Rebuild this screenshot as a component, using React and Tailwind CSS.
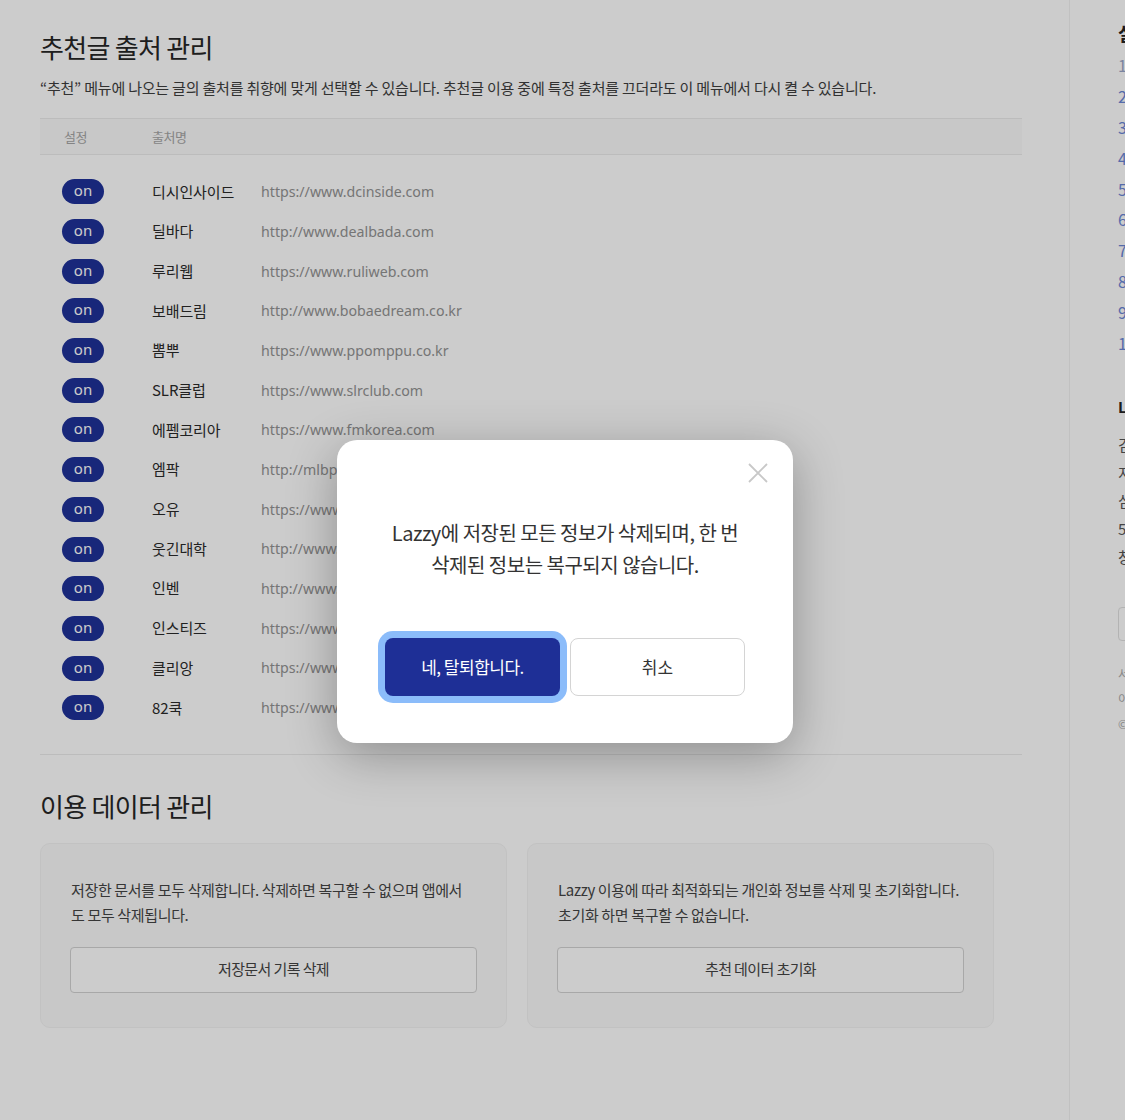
import React from 'react';

const KR = "font-['Noto_Sans_CJK_KR',sans-serif]";
const LATIN = "font-['Noto_Sans','Noto_Sans_CJK_KR',sans-serif]";

const sources = [
  { name: '디시인사이드', url: 'https://www.dcinside.com' },
  { name: '딜바다', url: 'http://www.dealbada.com' },
  { name: '루리웹', url: 'https://www.ruliweb.com' },
  { name: '보배드림', url: 'http://www.bobaedream.co.kr' },
  { name: '뽐뿌', url: 'https://www.ppomppu.co.kr' },
  { name: 'SLR클럽', url: 'https://www.slrclub.com' },
  { name: '에펨코리아', url: 'https://www.fmkorea.com' },
  { name: '엠팍', url: 'http://mlbpark.donga.com' },
  { name: '오유', url: 'https://www.todayhumor.co.kr' },
  { name: '웃긴대학', url: 'http://www.humoruniv.com' },
  { name: '인벤', url: 'http://www.inven.co.kr' },
  { name: '인스티즈', url: 'https://www.instiz.net' },
  { name: '클리앙', url: 'https://www.clien.net' },
  { name: '82쿡', url: 'https://www.82cook.com' },
];

const keywords = ['1 라지 추천글', '2 커뮤니티 인기글', '3 오늘의 유머', '4 IT 뉴스', '5 자동차 리뷰', '6 게임 소식', '7 스포츠 하이라이트', '8 요리 레시피', '9 여행 후기', '10 생활 꿀팁'];

const SourceRow = ({ name, url }) => (
  <div className="flex items-center h-[39.7px]">
    <div className="w-[112px] pl-[22px]">
      <span className={`flex items-center justify-center w-[42px] h-[25px] rounded-full bg-[#1f3199] text-white text-[15px] leading-none pb-[2px] ${LATIN}`}>
        on
      </span>
    </div>
    <span className={`w-[109px] text-[15px] text-[#2a2a2a] tracking-[-0.1px] ${KR}`}>{name}</span>
    <span className={`text-[14.2px] text-[#939393] ${LATIN}`}>{url}</span>
  </div>
);

const DataCard = ({ text, button }) => (
  <div className="w-[467px] h-[185px] rounded-[10px] border border-[#f3f3f3] bg-[#fbfbfb] px-[29px] pt-[33px]">
    <p className={`pl-[1px] text-[15px] leading-[25px] text-[#444] tracking-[-0.35px] ${KR}`}>{text}</p>
    <button className={`mt-[20px] w-full h-[46px] rounded-[4px] border border-[#d2d2d2] bg-white text-[15px] text-[#444] tracking-[-0.6px] ${KR}`}>
      {button}
    </button>
  </div>
);

export default function App() {
  return (
    <div className={`relative w-[1125px] h-[1120px] overflow-hidden bg-white flex ${KR}`}>
      <main className="w-[1069px] shrink-0 pl-10 pt-[28px]">
        <h2 className="text-[26px] leading-[38px] text-[#262626] tracking-[-0.7px]">추천글 출처 관리</h2>
        <p className="mt-[11px] text-[15px] leading-[22px] text-[#3e3e3e] tracking-[-0.2px]">
          “추천” 메뉴에 나오는 글의 출처를 취향에 맞게 선택할 수 있습니다. 추천글 이용 중에 특정 출처를 끄더라도 이 메뉴에서 다시 켤 수 있습니다.
        </p>

        <div className="w-[982px] mt-[19px]">
          <div className="flex items-center h-[37px] border-y border-[#ececec] bg-[#fafafa] text-[13px] text-[#a6a6a6] tracking-[-0.5px]">
            <span className="w-[112px] pl-[24px]">설정</span>
            <span>출처명</span>
          </div>
          <div className="pt-[17px]">
            {sources.map((s) => (
              <SourceRow key={s.name} {...s} />
            ))}
          </div>
          <div className="mt-[26px] border-t border-[#ececec]" />
        </div>

        <h2 className="mt-[32px] text-[26px] leading-[38px] text-[#262626] tracking-[-0.7px]">이용 데이터 관리</h2>
        <div className="mt-[18px] flex gap-5">
          <DataCard
            text="저장한 문서를 모두 삭제합니다. 삭제하면 복구할 수 없으며 앱에서 도 모두 삭제됩니다."
            button="저장문서 기록 삭제"
          />
          <DataCard
            text="Lazzy 이용에 따라 최적화되는 개인화 정보를 삭제 및 초기화합니다. 초기화 하면 복구할 수 없습니다."
            button="추천 데이터 초기화"
          />
        </div>
      </main>

      <aside className="w-[300px] shrink-0 border-l border-[#f2f2f2] pl-[48px] pt-[21px]">
        <h3 className="text-[18px] leading-[24px] font-bold text-[#222] tracking-[-0.5px]">실시간 인기 키워드</h3>
        <ul className="mt-[5px]">
          {keywords.map((k, i) => (
            <li key={k} className={`h-[30.8px] flex items-center text-[16px] ${i === 0 ? 'text-[#9aa6c8]' : 'text-[#6b86d6]'}`}>
              {k}
            </li>
          ))}
        </ul>
        <h3 className="mt-[38px] text-[15px] leading-[22px] font-bold text-[#222]">Lazzy 고객센터</h3>
        <div className="mt-[13px] text-[15px] leading-[28px] text-[#555] tracking-[-0.5px]">
          <p>검색 기반 추천 서비스</p>
          <p>지원 시간 평일 10:00 - 18:00</p>
          <p>심야 및 주말 휴무</p>
          <p>5분 내 답변 드립니다</p>
          <p>창업 문의 환영합니다</p>
        </div>
        <button className="mt-[36px] w-[220px] h-[34px] rounded-[4px] border border-[#e0e0e0] text-[14px] text-[#555]">
          1:1 문의하기
        </button>
        <div className="mt-[20px] text-[12px] leading-[25px] text-[#aaa]">
          <p>서비스 이용약관</p>
          <p>이용자 개인정보처리방침</p>
          <p>© Lazzy Corp.</p>
        </div>
      </aside>

      <div className="absolute inset-0 bg-black/20" />

      <div className="absolute left-[337px] top-[440px] w-[456px] h-[303px] rounded-[20px] bg-white shadow-[0_12px_50px_rgba(0,0,0,0.3)]">
        <div className="flex justify-end pt-[22px] pr-[24px]">
          <button className="w-[22px] h-[22px] text-[#c8c8c8]" aria-label="닫기">
            <svg viewBox="0 0 22 22" width="22" height="22" fill="none" stroke="currentColor" strokeWidth="1.8">
              <path d="M2 2 L20 20 M20 2 L2 20" />
            </svg>
          </button>
        </div>
        <p className="mt-[33px] text-center text-[20px] leading-[32px] text-[#333] tracking-[-0.5px]">
          Lazzy에 저장된 모든 정보가 삭제되며, 한 번
          <br />
          삭제된 정보는 복구되지 않습니다.
        </p>
        <div className="mt-[57px] flex justify-center gap-[10px]">
          <button className="w-[175px] h-[58px] rounded-[8px] bg-[#1e2f96] text-white text-[17px] tracking-[-0.5px] ring-[7px] ring-[#8bbcfa]">
            네, 탈퇴합니다.
          </button>
          <button className="w-[175px] h-[58px] rounded-[8px] border border-[#d4d4d4] bg-white text-[17px] text-[#333]">
            취소
          </button>
        </div>
      </div>
    </div>
  );
}
